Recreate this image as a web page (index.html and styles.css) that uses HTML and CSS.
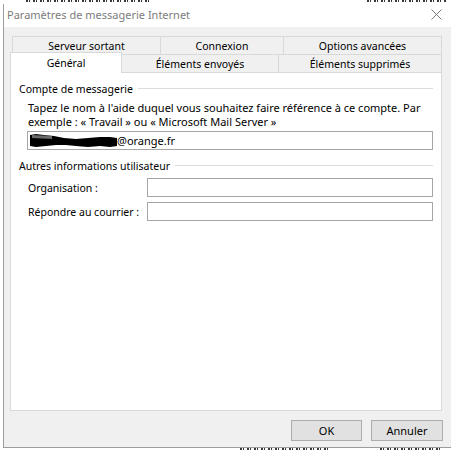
FILE: index.html
```html
<!DOCTYPE html>
<html lang="fr">
<head>
<meta charset="utf-8">
<title>Paramètres de messagerie Internet</title>
<link rel="stylesheet" href="styles.css">
</head>
<body>
<div class="bgtop"><span class="frag f1"></span><span class="frag f2"></span></div>
<div class="window">
  <div class="titlebar">
    <span class="title">Paramètres de messagerie Internet</span>
    <svg class="close" width="11" height="11" viewBox="0 0 11 11"><path d="M0.5 0.5 L10.5 10.5 M10.5 0.5 L0.5 10.5" stroke="#7a7a7a" stroke-width="1" fill="none"/></svg>
  </div>
  <div class="body">
    <div class="tabs">
      <div class="tabrow back">
        <div class="tab t1">Serveur sortant</div>
        <div class="tab t2">Connexion</div>
        <div class="tab t3">Options avancées</div>
      </div>
      <div class="tabrow front">
        <div class="tab sel">Général</div>
        <div class="tab t5">Éléments envoyés</div>
        <div class="tab t6">Éléments supprimés</div>
      </div>
    </div>
    <div class="panel">
      <div class="legend"><span>Compte de messagerie</span><span class="rule"></span></div>
      <p class="desc">Tapez le nom à l'aide duquel vous souhaitez faire référence à ce compte. Par<br>exemple : « Travail » ou « Microsoft Mail Server »</p>
      <div class="field wide">
        <svg class="redact" width="87" height="14" viewBox="0 0 87 14"><path d="M0 1 L6 0 L14 1 L24 2 L34 4 L46 5 L58 4 L70 3 L80 3 L87 4 L87 12 L80 13 L70 12 L58 13 L46 12 L36 11 L26 11 L16 12 L6 13 L0 12 Z" fill="#000"/><path d="M2 1 L22 2 L22 5 L2 4 Z" fill="#6a6a6a"/></svg><span class="mail">@orange.fr</span>
      </div>
      <div class="legend second"><span>Autres informations utilisateur</span><span class="rule"></span></div>
      <div class="row"><span class="lbl">Organisation :</span><div class="field"></div></div>
      <div class="row r2"><span class="lbl">Répondre au courrier :</span><div class="field"></div></div>
    </div>
    <div class="buttons">
      <button class="btn">OK</button>
      <button class="btn">Annuler</button>
    </div>
  </div>
</div>
<div class="bgbottom"><span class="frag f3"></span><span class="frag f4"></span></div>
</body>
</html>
```
FILE: styles.css
```css
html, body {
  margin: 0;
  padding: 0;
}
body {
  width: 451px;
  height: 450px;
  overflow: hidden;
  background: #ffffff;
  font-family: "Noto Sans", "DejaVu Sans", sans-serif;
  font-size: 10.5px;
  color: #000;
}
.bgtop {
  height: 4px;
  overflow: hidden;
  display: flex;
  justify-content: space-between;
  padding: 0 4px 0 26px;
}
.frag {
  display: block;
  height: 2px;
  background: repeating-linear-gradient(90deg, #3a3a3a 0 2px, transparent 2px 3px, #3a3a3a 3px 4px, transparent 4px 7px);
}
.f1 { width: 125px; }
.f2 { width: 80px; }
.window {
  margin-left: 3px;
  height: 443px;
  border-left: 1px solid #9c9c9c;
  border-bottom: 1px solid #9c9c9c;
  background: #f0f0f0;
  display: flex;
  flex-direction: column;
}
.titlebar {
  box-sizing: border-box;
  height: 23px;
  flex: none;
  background: #ffffff;
  display: flex;
  align-items: center;
  justify-content: space-between;
  padding: 0 9px 3px 3px;
}
.title {
  font-size: 11px;
  color: #7c7c7c;
}
.close {
  display: block;
}
.body {
  flex: 1;
  padding: 9px 9px 0 6px;
  display: flex;
  flex-direction: column;
}
.tabs {
  display: flex;
  flex-direction: column;
}
.tabrow {
  display: flex;
  height: 18px;
}
.tabrow.back {
  margin-left: 2px;
}
.tab {
  box-sizing: border-box;
  border-top: 1px solid #d9d9d9;
  border-left: 1px solid #d9d9d9;
  background: #f0f0f0;
  display: flex;
  align-items: center;
  justify-content: center;
  white-space: nowrap;
  height: 18px;
}
.tab:last-child {
  border-right: 1px solid #d9d9d9;
}
.t1 { width: 148px; }
.t2 { width: 123px; }
.t3 { width: 159px; }
.sel {
  width: 112px;
  height: 21px;
  margin-top: -2px;
  margin-bottom: -1px;
  background: #ffffff;
  position: relative;
  z-index: 1;
  border-right: 1px solid #d9d9d9;
}
.t5 { width: 156px; border-left: none; }
.t6 { width: 164px; }
.panel {
  box-sizing: border-box;
  height: 339px;
  background: #ffffff;
  border: 1px solid #d9d9d9;
  padding: 8px 8px 0 8px;
}
.legend {
  display: flex;
  align-items: center;
  height: 15px;
  white-space: nowrap;
}
.legend .rule {
  flex: 1;
  border-top: 1px solid #dcdcdc;
  margin-left: 5px;
}
.desc {
  margin: 5px 0 0 9px;
  font-size: 11px;
  line-height: 14px;
  white-space: nowrap;
}
.field {
  box-sizing: border-box;
  height: 19px;
  border: 1px solid #a6a6a6;
  background: #fff;
  display: flex;
  align-items: center;
}
.field.wide {
  margin: 2px 0 0 8px;
  padding-left: 2px;
}
.mail {
  font-size: 11px;
}
.redact {
  display: block;
  margin-top: 1px;
}
.legend.second {
  margin-top: 8px;
}
.row {
  display: flex;
  align-items: center;
  margin: 5px 0 0 9px;
}
.row.r2 {
  margin-top: 5px;
}
.lbl {
  width: 119px;
  flex: none;
}
.row .field {
  flex: 1;
}
.buttons {
  display: flex;
  justify-content: flex-end;
  gap: 9px;
  margin-top: 9px;
  margin-right: -1px;
}
.btn {
  box-sizing: border-box;
  width: 72px;
  height: 21px;
  border: 1px solid #adadad;
  background: #e1e1e1;
  font-family: inherit;
  font-size: 11px;
  color: #000;
  padding: 0;
}
.btn:first-child {
  width: 71px;
}
.bgbottom {
  height: 2px;
  overflow: hidden;
  display: flex;
  padding-left: 240px;
  gap: 50px;
}
.f3 { width: 90px; }
.f4 { width: 60px; }
```
